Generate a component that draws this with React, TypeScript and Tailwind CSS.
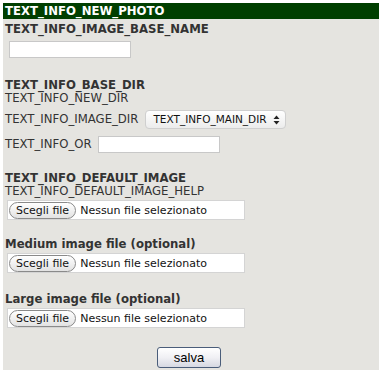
const FileField = () => (
  <div className="flex items-center h-[20px] w-[238px] bg-white border border-[#d4d4d4] text-[11px]">
    <span className="ml-[1px] h-[17px] px-[6px] flex items-center rounded-full border border-[#8a8a8a] bg-gradient-to-b from-[#ffffff] to-[#e2e2e2] text-[#111]">
      Scegli file
    </span>
    <span className="ml-[4px] text-[#111]">Nessun file selezionato</span>
  </div>
);

const TextBox = ({ w }: { w: string }) => (
  <div className={`${w} h-[17px] bg-white border border-[#c8c8c8] shrink-0`} />
);

export default function App() {
  return (
    <div className="bg-white p-[3px] w-[387px] h-[373px]" style={{ fontFamily: '"DejaVu Sans", Verdana, sans-serif' }}>
      <div className="w-[376px] h-[367px] bg-[#e5e4e0] text-[11.7px] leading-[13px] text-[#333]">
        <div className="h-[16px] bg-[#003f00] text-white font-bold px-[2px] flex items-center">
          TEXT_INFO_NEW_PHOTO
        </div>
        <div className="px-[2px]">
          <div className="font-bold mt-[4px]">TEXT_INFO_IMAGE_BASE_NAME</div>
          <div className="mt-[5px] ml-[4px]">
            <TextBox w="w-[122px]" />
          </div>

          <div className="font-bold mt-[21px]">TEXT_INFO_BASE_DIR</div>
          <div>TEXT_INFO_NEW_DIR</div>
          <div className="flex items-center mt-[5px] gap-[7px]">
            <span>TEXT_INFO_IMAGE_DIR</span>
            <div className="shrink-0 flex items-center justify-between h-[19px] w-[141px] rounded-[4px] bg-gradient-to-b from-[#ffffff] to-[#ececec] border border-[#cfcfcf] pl-[7px] pr-[5px] text-[10.5px] text-[#111]">
              <span>TEXT_INFO_MAIN_DIR</span>
              <svg width="7" height="10" viewBox="0 0 7 10">
                <path d="M3.5 0.5 L6.5 4 L0.5 4 Z" fill="#222" />
                <path d="M3.5 9.5 L6.5 6 L0.5 6 Z" fill="#222" />
              </svg>
            </div>
          </div>
          <div className="flex items-center mt-[7px] gap-[6px]">
            <span>TEXT_INFO_OR</span>
            <TextBox w="w-[122px]" />
          </div>

          <div className="font-bold mt-[19px]">TEXT_INFO_DEFAULT_IMAGE</div>
          <div>TEXT_INFO_DEFAULT_IMAGE_HELP</div>
          <div className="ml-[2px] mt-[2px]">
            <FileField />
          </div>

          <div className="font-bold mt-[18px]">Medium image file (optional)</div>
          <div className="ml-[2px] mt-[2px]">
            <FileField />
          </div>

          <div className="font-bold mt-[20px]">Large image file (optional)</div>
          <div className="ml-[2px] mt-[2px]">
            <FileField />
          </div>

          <div className="flex justify-center mt-[19px] pr-[4px]">
            <div className="w-[64px] h-[21px] rounded-[3px] border border-[#4a5d7a] bg-gradient-to-b from-[#ffffff] via-[#f0f0f4] to-[#d6d8e2] flex items-center justify-center text-[13px] text-black" style={{ fontFamily: '"Liberation Sans", Arial, sans-serif' }}>
              salva
            </div>
          </div>
        </div>
      </div>
    </div>
  );
}
